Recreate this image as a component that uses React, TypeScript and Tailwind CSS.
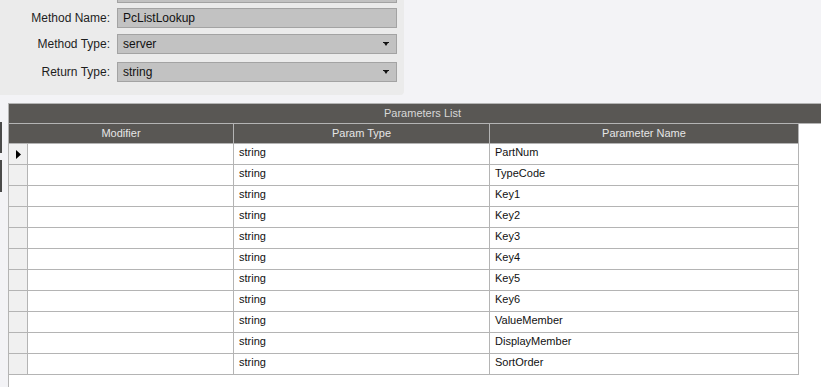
import React from "react";

const params = [
  "PartNum",
  "TypeCode",
  "Key1",
  "Key2",
  "Key3",
  "Key4",
  "Key5",
  "Key6",
  "ValueMember",
  "DisplayMember",
  "SortOrder",
];

function DropArrow() {
  return (
    <svg width="6" height="4" viewBox="0 0 6 4" className="shrink-0">
      <path d="M0 0h6v1H0z M1 1h4l-2 3z" fill="#111" />
    </svg>
  );
}

function FieldRow({
  label,
  value,
  select,
  className,
}: {
  label: string;
  value: string;
  select?: boolean;
  className?: string;
}) {
  return (
    <div className={"flex items-center " + (className || "")}>
      <div className="w-[111px] pr-[1px] text-right text-[12px] text-[#1e1e1e]">{label}</div>
      <div className="ml-[6px] flex h-[20px] w-[280px] items-center justify-between border border-[#a3a3a3] bg-[#c2c2c2] pl-[5px] pr-[7px] text-[12px] text-[#111]">
        <span>{value}</span>
        {select && <DropArrow />}
      </div>
    </div>
  );
}

export default function App() {
  return (
    <div
      className="relative h-[387px] w-[821px] overflow-hidden bg-[#f3f3f6]"
      style={{ fontFamily: '"Liberation Sans", Arial, sans-serif' }}
    >
      {/* Method details panel */}
      <div className="h-[95px] w-[404px] rounded-br-[4px] bg-[#ebebeb]">
        <div className="ml-[117px] h-[3px] w-[280px] border-x border-b border-[#a3a3a3] bg-[#c2c2c2]" />
        <FieldRow label="Method Name:" value="PcListLookup" className="mt-[5px]" />
        <FieldRow label="Method Type:" value="server" select className="mt-[6px]" />
        <FieldRow label="Return Type:" value="string" select className="mt-[8px]" />
      </div>

      {/* Parameters grid */}
      <div className="mt-[8px] flex">
        <div className="w-[8px] shrink-0">
          <div className="mt-[19px] h-[31px] w-[2px] bg-[#4a4a4a]" />
          <div className="mt-[7px] h-[32px] w-[2px] bg-[#4a4a4a]" />
        </div>
        <div className="h-[284px] flex-1 border-l border-t border-[#b4b4b4] bg-white">
          <div className="flex h-[20px] items-center justify-center border-b border-[#b4b4b4] bg-[#595754] pl-[15px] text-[11px] text-[#d8d8d8]">
            Parameters List
          </div>
          <div className="flex h-[20px] w-[790px] border-b border-[#b4b4b4] bg-[#595754] text-[11px] text-[#e6e6e6]">
            <div className="flex w-[225px] items-center justify-center border-r border-[#b4b4b4]">Modifier</div>
            <div className="flex w-[256px] items-center justify-center border-r border-[#b4b4b4]">Param Type</div>
            <div className="flex w-[309px] items-center justify-center border-r border-[#b4b4b4]">Parameter Name</div>
          </div>
          {params.map((p, i) => (
            <div key={p} className="flex h-[21px] w-[790px] border-b border-[#b4b4b4] text-[11px] text-[#111]">
              <div className="flex w-[19px] items-center border-r border-[#b4b4b4] bg-[#f0f0f0] pl-[7px]">
                {i === 0 && (
                  <svg width="5" height="9" viewBox="0 0 5 9">
                    <path d="M0 0L5 4.5L0 9z" fill="#000" />
                  </svg>
                )}
              </div>
              <div className="w-[206px] border-r border-[#b4b4b4]" />
              <div className="flex w-[256px] items-center border-r border-[#b4b4b4] pb-[4px] pl-[5px]">string</div>
              <div className="flex w-[309px] items-center border-r border-[#b4b4b4] pb-[4px] pl-[5px]">{p}</div>
            </div>
          ))}
        </div>
      </div>
    </div>
  );
}
